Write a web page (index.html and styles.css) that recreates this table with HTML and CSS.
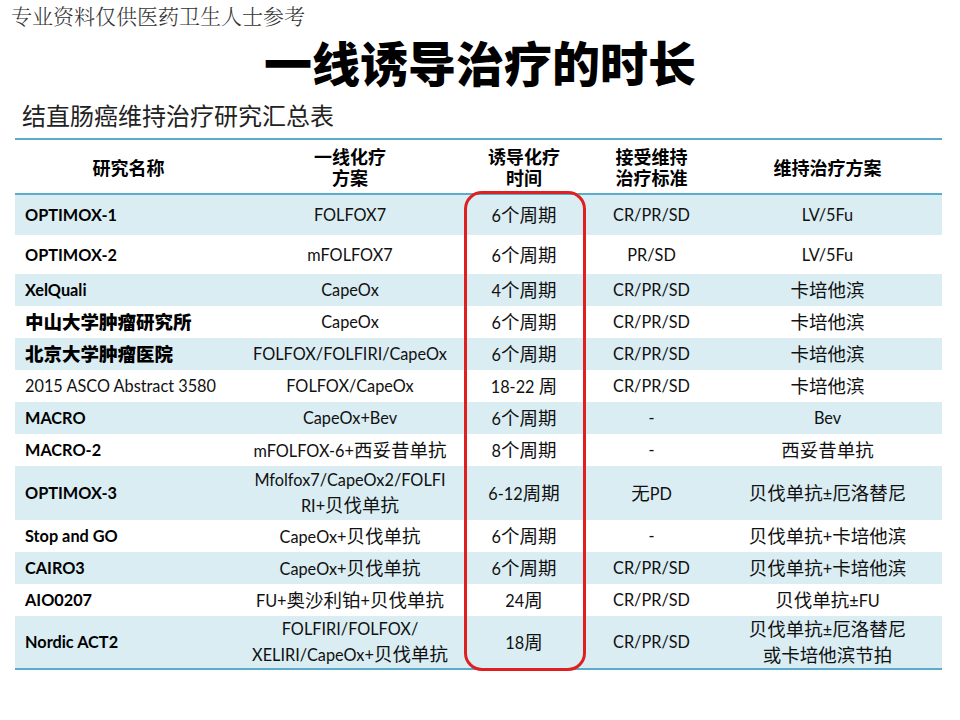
FILE: index.html
```html
<!DOCTYPE html>
<html lang="zh">
<head>
<meta charset="utf-8">
<title>一线诱导治疗的时长</title>
<link rel="stylesheet" href="styles.css">
</head>
<body>
<div class="page">
  <div class="watermark">专业资料仅供医药卫生人士参考</div>
  <h1 class="title">一线诱导治疗的时长</h1>
  <h2 class="subtitle">结直肠癌维持治疗研究汇总表</h2>
  <div class="table-wrap">
    <table class="studies">
      <colgroup>
        <col class="c-name"><col class="c-regimen"><col class="c-time"><col class="c-crit"><col class="c-maint">
      </colgroup>
      <thead>
        <tr>
          <th>研究名称</th>
          <th><div class="hl">一线化疗</div><div class="hl">方案</div></th>
          <th><div class="hl">诱导化疗</div><div class="hl">时间</div></th>
          <th><div class="hl">接受维持</div><div class="hl">治疗标准</div></th>
          <th>维持治疗方案</th>
        </tr>
      </thead>
      <tbody>
        <tr class="shade h41">
          <td class="name">OPTIMOX-1</td><td>FOLFOX7</td><td>6<span class="zh">个周期</span></td><td>CR/PR/SD</td><td>LV/5Fu</td>
        </tr>
        <tr class="h39">
          <td class="name">OPTIMOX-2</td><td>mFOLFOX7</td><td>6<span class="zh">个周期</span></td><td>PR/SD</td><td>LV/5Fu</td>
        </tr>
        <tr class="shade">
          <td class="name">XelQuali</td><td>CapeOx</td><td>4<span class="zh">个周期</span></td><td>CR/PR/SD</td><td><span class="zh">卡培他滨</span></td>
        </tr>
        <tr>
          <td class="name"><span class="zh">中山大学肿瘤研究所</span></td><td>CapeOx</td><td>6<span class="zh">个周期</span></td><td>CR/PR/SD</td><td><span class="zh">卡培他滨</span></td>
        </tr>
        <tr class="shade">
          <td class="name"><span class="zh">北京大学肿瘤医院</span></td><td>FOLFOX/FOLFIRI/CapeOx</td><td>6<span class="zh">个周期</span></td><td>CR/PR/SD</td><td><span class="zh">卡培他滨</span></td>
        </tr>
        <tr>
          <td class="name plain">2015 ASCO Abstract 3580</td><td>FOLFOX/CapeOx</td><td>18-22 <span class="zh">周</span></td><td>CR/PR/SD</td><td><span class="zh">卡培他滨</span></td>
        </tr>
        <tr class="shade">
          <td class="name">MACRO</td><td>CapeOx+Bev</td><td>6<span class="zh">个周期</span></td><td>-</td><td>Bev</td>
        </tr>
        <tr>
          <td class="name">MACRO-2</td><td>mFOLFOX-6+<span class="zh">西妥昔单抗</span></td><td>8<span class="zh">个周期</span></td><td>-</td><td><span class="zh">西妥昔单抗</span></td>
        </tr>
        <tr class="shade h54">
          <td class="name">OPTIMOX-3</td><td class="two">Mfolfox7/CapeOx2/FOLFI<br>RI+<span class="zh">贝伐单抗</span></td><td>6-12<span class="zh">周期</span></td><td><span class="zh">无</span>PD</td><td><span class="zh">贝伐单抗</span>±<span class="zh">厄洛替尼</span></td>
        </tr>
        <tr>
          <td class="name">Stop and GO</td><td>CapeOx+<span class="zh">贝伐单抗</span></td><td>6<span class="zh">个周期</span></td><td>-</td><td><span class="zh">贝伐单抗</span>+<span class="zh">卡培他滨</span></td>
        </tr>
        <tr class="shade">
          <td class="name">CAIRO3</td><td>CapeOx+<span class="zh">贝伐单抗</span></td><td>6<span class="zh">个周期</span></td><td>CR/PR/SD</td><td><span class="zh">贝伐单抗</span>+<span class="zh">卡培他滨</span></td>
        </tr>
        <tr>
          <td class="name">AIO0207</td><td>FU+<span class="zh">奥沙利铂</span>+<span class="zh">贝伐单抗</span></td><td>24<span class="zh">周</span></td><td>CR/PR/SD</td><td><span class="zh">贝伐单抗</span>±FU</td>
        </tr>
        <tr class="shade h53">
          <td class="name">Nordic ACT2</td><td class="two">FOLFIRI/FOLFOX/<br>XELIRI/CapeOx+<span class="zh">贝伐单抗</span></td><td>18<span class="zh">周</span></td><td>CR/PR/SD</td><td class="two"><span class="zh">贝伐单抗</span>±<span class="zh">厄洛替尼</span><br><span class="zh">或卡培他滨节拍</span></td>
        </tr>
      </tbody>
    </table>
    <div class="highlight"></div>
  </div>
</div>
</body>
</html>
```

FILE: styles.css
```css
* { box-sizing: border-box; }

html, body {
  margin: 0;
  padding: 0;
  background: #ffffff;
}

.page {
  width: 960px;
  height: 720px;
  overflow: hidden;
  font-family: "Lato", "Noto Sans CJK SC", sans-serif;
  color: #111111;
}

.watermark {
  height: 30px;
  line-height: 30px;
  padding-left: 11px;
  font-family: "Noto Serif CJK SC", "Noto Sans CJK SC", serif;
  font-weight: 300;
  font-size: 21px;
  color: #333333;
}

.title {
  margin: 0;
  height: 62px;
  line-height: 62px;
  text-align: center;
  font-family: "Noto Sans CJK SC", sans-serif;
  font-weight: 900;
  font-size: 48px;
  color: #000000;
}

.subtitle {
  margin: 0;
  height: 46px;
  line-height: 46px;
  padding-left: 22px;
  font-family: "Noto Sans CJK SC", sans-serif;
  font-weight: 400;
  font-size: 24px;
  color: #222222;
}

.table-wrap {
  position: relative;
  margin-left: 15px;
  width: 927px;
}

.studies {
  width: 927px;
  table-layout: fixed;
  border-collapse: collapse;
  border-top: 2px solid #5aaccb;
  border-bottom: 2px solid #5aaccb;
  font-size: 16.3px;
}

.c-name { width: 227px; }
.c-regimen { width: 216px; }
.c-time { width: 132px; }
.c-crit { width: 123px; }
.c-maint { width: 229px; }

.studies th {
  height: 55px;
  padding: 0;
  font-family: "Noto Sans CJK SC", sans-serif;
  font-weight: 700;
  font-size: 18px;
  line-height: 22px;
  color: #000000;
  text-align: center;
  vertical-align: middle;
  border-bottom: 2px solid #5aaccb;
}

.studies th .hl {
  height: 21px;
  line-height: 21px;
}

.studies td {
  height: 32px;
  padding: 0;
  text-align: center;
  vertical-align: middle;
  line-height: 20px;
  white-space: nowrap;
}

.studies td.two {
  line-height: 24px;
}

.studies td.name {
  text-align: left;
  padding-left: 10px;
  font-weight: 700;
  color: #000000;
}

.studies td.name.plain {
  font-weight: 400;
  color: #111111;
}

.studies td.name .zh {
  font-weight: 900;
}

.zh {
  font-family: "Noto Sans CJK SC", sans-serif;
  font-size: 18.5px;
}

.studies tr.shade td { background: #daedf3; }
.studies tr.h41 td { height: 41px; }
.studies tr.h39 td { height: 39px; }
.studies tr.h54 td { height: 54px; }
.studies tr.h53 td { height: 53px; }

.highlight {
  position: absolute;
  left: 449px;
  top: 53px;
  width: 122px;
  height: 480px;
  border: 3px solid #e02020;
  border-radius: 18px;
  pointer-events: none;
}
```
